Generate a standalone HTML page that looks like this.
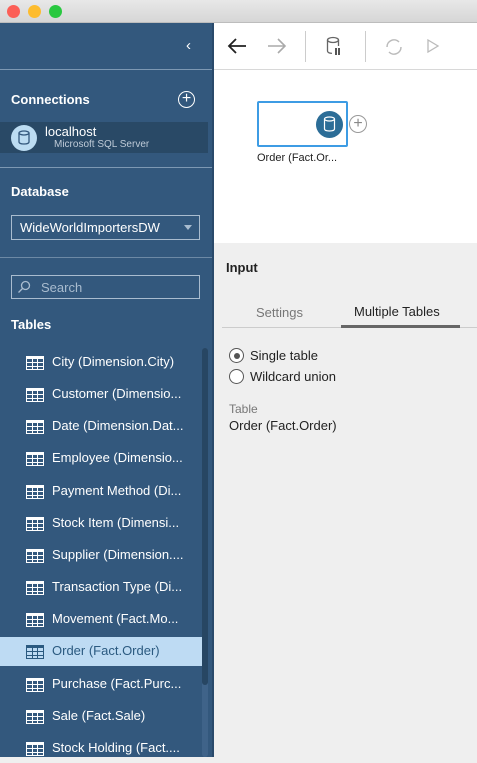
<!DOCTYPE html>
<html><head><style>
*{margin:0;padding:0;box-sizing:border-box}
body{width:477px;height:757px;overflow:hidden;font-family:"Liberation Sans",sans-serif;background:#efefef;position:relative}
.abs{position:absolute}
.tb{left:0;top:0;width:477px;height:23px;background:linear-gradient(#e8e8e8,#d6d6d6);border-bottom:1px solid #bdbdbd}
.dot{top:5px;width:13px;height:13px;border-radius:50%}
.side{left:0;top:23px;width:212px;height:734px;background:#33587d;color:#fff}
.hl{height:1px;background:#7d98b3;left:0;width:212px}
.h{font-weight:bold;font-size:13px;left:11px}
.row{left:0;width:202px;height:29px;font-size:13px;color:#fff}
.row span{position:absolute;left:52px;top:6px;white-space:nowrap}
.ic{position:absolute;left:26px;top:8px;width:18px;height:14px;border:1px solid #fff;background:
linear-gradient(#fff,#fff) 0 3px/100% 1px no-repeat,
linear-gradient(#fff,#fff) 0 7px/100% 1px no-repeat,
linear-gradient(#fff,#fff) 5px 0/1px 100% no-repeat,
linear-gradient(#fff,#fff) 10px 0/1px 100% no-repeat;border-top-width:3px}
.sel{background:#bedbf3;color:#2b5a80}
.sel .ic{border-color:#2b5a80;background:
linear-gradient(#2b5a80,#2b5a80) 0 3px/100% 1px no-repeat,
linear-gradient(#2b5a80,#2b5a80) 0 7px/100% 1px no-repeat,
linear-gradient(#2b5a80,#2b5a80) 5px 0/1px 100% no-repeat,
linear-gradient(#2b5a80,#2b5a80) 10px 0/1px 100% no-repeat}
</style></head><body>
<div class="abs tb"></div>
<div class="abs dot" style="left:7px;background:#fc5f57"></div>
<div class="abs dot" style="left:28px;background:#fdbc2e"></div>
<div class="abs dot" style="left:49px;background:#29c840"></div>

<div class="abs side"></div>
<div class="abs" style="left:212px;top:23px;width:2px;height:734px;background:#2a4a6b"></div>
<div class="abs" style="left:186px;top:37px;color:#fff;font-size:15px">‹</div>
<div class="abs hl" style="top:69px"></div>
<div class="abs h" style="top:92px;color:#fff">Connections</div>
<div class="abs" style="left:178px;top:91px;width:17px;height:17px;border:1.5px solid #fff;border-radius:50%;color:#fff;font-size:16px;line-height:13px;text-align:center">+</div>
<div class="abs" style="left:0;top:122px;width:208px;height:31px;background:#294966"></div>
<div class="abs" style="left:11px;top:125px;width:26px;height:26px;border-radius:50%;background:#bcdcf2"></div>
<svg class="abs" style="left:17px;top:130px" width="14" height="16"><ellipse cx="7" cy="3" rx="5" ry="2" fill="none" stroke="#33587d" stroke-width="1.3"/><path d="M2 3v9c0 1.2 2.2 2 5 2s5-.8 5-2V3" fill="none" stroke="#33587d" stroke-width="1.3"/></svg>
<div class="abs" style="left:45px;top:124px;color:#fff;font-size:13px">localhost</div>
<div class="abs" style="left:54px;top:139px;color:#bfcbd8;font-size:10px">Microsoft SQL Server</div>
<div class="abs hl" style="top:167px"></div>
<div class="abs h" style="top:184px;color:#fff">Database</div>
<div class="abs" style="left:11px;top:215px;width:189px;height:25px;border:1px solid #a9bccf;color:#fff;font-size:13px;padding:4px 0 0 8px">WideWorldImportersDW</div>
<div class="abs" style="left:184px;top:225px;width:0;height:0;border-left:4px solid transparent;border-right:4px solid transparent;border-top:5px solid #a9bccf"></div>
<div class="abs" style="left:0;top:257px;width:212px;height:1px;background:#6d89a5"></div>
<div class="abs" style="left:11px;top:275px;width:189px;height:24px;border:1px solid #a9bccf"></div>
<svg class="abs" style="left:17px;top:280px" width="14" height="14"><circle cx="8.5" cy="5.5" r="4" fill="none" stroke="#a9bccf" stroke-width="1.3"/><path d="M5.5 8.5L1.5 12.5" stroke="#a9bccf" stroke-width="1.3"/></svg>
<div class="abs" style="left:41px;top:280px;color:#a9bccf;font-size:13px">Search</div>
<div class="abs h" style="top:317px;color:#fff">Tables</div>
<div class="abs" style="left:202px;top:348px;width:6px;height:409px;background:#3f6389;border-radius:3px"></div>
<div class="abs" style="left:202px;top:348px;width:6px;height:337px;background:#274663;border-radius:3px"></div>

<div class="abs row" style="top:348px"><i class="ic"></i><span>City (Dimension.City)</span></div>
<div class="abs row" style="top:380px"><i class="ic"></i><span>Customer (Dimensio...</span></div>
<div class="abs row" style="top:412px"><i class="ic"></i><span>Date (Dimension.Dat...</span></div>
<div class="abs row" style="top:444px"><i class="ic"></i><span>Employee (Dimensio...</span></div>
<div class="abs row" style="top:477px"><i class="ic"></i><span>Payment Method (Di...</span></div>
<div class="abs row" style="top:509px"><i class="ic"></i><span>Stock Item (Dimensi...</span></div>
<div class="abs row" style="top:541px"><i class="ic"></i><span>Supplier (Dimension....</span></div>
<div class="abs row" style="top:573px"><i class="ic"></i><span>Transaction Type (Di...</span></div>
<div class="abs row" style="top:605px"><i class="ic"></i><span>Movement (Fact.Mo...</span></div>
<div class="abs row sel" style="top:637px"><i class="ic"></i><span>Order (Fact.Order)</span></div>
<div class="abs row" style="top:670px"><i class="ic"></i><span>Purchase (Fact.Purc...</span></div>
<div class="abs row" style="top:702px"><i class="ic"></i><span>Sale (Fact.Sale)</span></div>
<div class="abs row" style="top:734px"><i class="ic"></i><span>Stock Holding (Fact....</span></div>

<div class="abs" style="left:214px;top:23px;width:263px;height:220px;background:#fff"></div>
<div class="abs" style="left:214px;top:69px;width:263px;height:1px;background:#d8d8d8"></div>
<svg class="abs" style="left:226px;top:36px" width="22" height="20"><path d="M20 10H3M10 3L3 10l7 7" fill="none" stroke="#222" stroke-width="1.8"/></svg>
<svg class="abs" style="left:266px;top:36px" width="22" height="20"><path d="M2 10h17M12 3l7 7-7 7" fill="none" stroke="#aaa" stroke-width="1.6"/></svg>
<div class="abs" style="left:305px;top:31px;width:1px;height:31px;background:#ccc"></div>
<svg class="abs" style="left:325px;top:36px" width="20" height="22"><ellipse cx="8" cy="4" rx="5.5" ry="2.5" fill="none" stroke="#666" stroke-width="1.3"/><path d="M2.5 4v11c0 1.3 2 2.2 4.5 2.4" fill="none" stroke="#666" stroke-width="1.3"/><path d="M13.5 4v6" stroke="#666" stroke-width="1.3"/><path d="M11 12v7M14 12v7" stroke="#444" stroke-width="1.8"/></svg>
<div class="abs" style="left:365px;top:31px;width:1px;height:31px;background:#ccc"></div>
<svg class="abs" style="left:384px;top:37px" width="20" height="20"><path d="M3 10a7 7 0 0 1 12-5M17 10a7 7 0 0 1-12 5" fill="none" stroke="#bbb" stroke-width="1.5"/></svg>
<svg class="abs" style="left:426px;top:39px" width="14" height="14"><path d="M2 1l10 6-10 6z" fill="none" stroke="#bbb" stroke-width="1.3"/></svg>

<div class="abs" style="left:257px;top:101px;width:91px;height:46px;border:2px solid #3d9ce4;border-radius:2px;background:#fff"></div>
<div class="abs" style="left:316px;top:111px;width:27px;height:27px;border-radius:50%;background:#2c6d97"></div>
<svg class="abs" style="left:322px;top:116px" width="15" height="17"><ellipse cx="7.5" cy="3" rx="5" ry="2" fill="none" stroke="#fff" stroke-width="1.2"/><path d="M2.5 3v10c0 1.2 2.2 2 5 2s5-.8 5-2V3" fill="none" stroke="#fff" stroke-width="1.2"/></svg>
<div class="abs" style="left:349px;top:115px;width:18px;height:18px;border:1.2px solid #999;border-radius:50%;color:#888;font-size:16px;line-height:15px;text-align:center">+</div>
<div class="abs" style="left:257px;top:152px;font-size:11px;color:#222">Order (Fact.Or...</div>

<div class="abs" style="left:226px;top:260px;font-size:13px;font-weight:bold;color:#222">Input</div>
<div class="abs" style="left:256px;top:305px;font-size:13px;color:#777">Settings</div>
<div class="abs" style="left:354px;top:304px;font-size:13px;color:#222">Multiple Tables</div>
<div class="abs" style="left:222px;top:327px;width:255px;height:1px;background:#ccc"></div>
<div class="abs" style="left:341px;top:325px;width:119px;height:3px;background:#666"></div>
<div class="abs" style="left:229px;top:348px;width:15px;height:15px;border:1.3px solid #555;border-radius:50%;background:#fff"></div>
<div class="abs" style="left:233.5px;top:352.5px;width:6px;height:6px;border-radius:50%;background:#555"></div>
<div class="abs" style="left:250px;top:348px;font-size:13px;color:#222">Single table</div>
<div class="abs" style="left:229px;top:369px;width:15px;height:15px;border:1.3px solid #555;border-radius:50%;background:#fff"></div>
<div class="abs" style="left:250px;top:369px;font-size:13px;color:#222">Wildcard union</div>
<div class="abs" style="left:229px;top:402px;font-size:12px;color:#777">Table</div>
<div class="abs" style="left:229px;top:418px;font-size:13px;color:#222">Order (Fact.Order)</div>
</body></html>
